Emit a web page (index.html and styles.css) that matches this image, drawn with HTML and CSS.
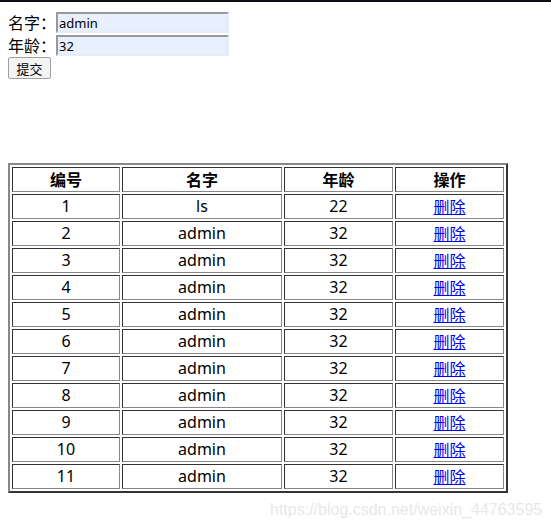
FILE: index.html
```html
<!DOCTYPE html>
<html lang="zh">
<head>
<meta charset="utf-8">
<title>用户列表</title>
<link rel="stylesheet" href="styles.css">
</head>
<body>
<div class="topbar"></div>
<div class="page">
  <form class="form">
    <div class="row"><span class="label">名字：</span><input class="field" type="text" value="admin"></div>
    <div class="row"><span class="label">年龄：</span><input class="field" type="text" value="32"></div>
    <div class="row btnrow"><button class="btn" type="button">提交</button></div>
  </form>
  <table class="grid">
    <thead>
      <tr><th class="c1">编号</th><th class="c2">名字</th><th class="c3">年龄</th><th class="c4">操作</th></tr>
    </thead>
    <tbody>
      <tr><td>1</td><td>ls</td><td>22</td><td><a href="#">删除</a></td></tr>
      <tr><td>2</td><td>admin</td><td>32</td><td><a href="#">删除</a></td></tr>
      <tr><td>3</td><td>admin</td><td>32</td><td><a href="#">删除</a></td></tr>
      <tr><td>4</td><td>admin</td><td>32</td><td><a href="#">删除</a></td></tr>
      <tr><td>5</td><td>admin</td><td>32</td><td><a href="#">删除</a></td></tr>
      <tr><td>6</td><td>admin</td><td>32</td><td><a href="#">删除</a></td></tr>
      <tr><td>7</td><td>admin</td><td>32</td><td><a href="#">删除</a></td></tr>
      <tr><td>8</td><td>admin</td><td>32</td><td><a href="#">删除</a></td></tr>
      <tr><td>9</td><td>admin</td><td>32</td><td><a href="#">删除</a></td></tr>
      <tr><td>10</td><td>admin</td><td>32</td><td><a href="#">删除</a></td></tr>
      <tr><td>11</td><td>admin</td><td>32</td><td><a href="#">删除</a></td></tr>
    </tbody>
  </table>
</div>
<div class="watermark">https://blog.csdn.net/weixin_44763595</div>
</body>
</html>
```
FILE: styles.css
```css
html, body {
  margin: 0;
  padding: 0;
  background: #fff;
}
body {
  font-family: "Noto Sans", "Noto Sans CJK SC", sans-serif;
  font-size: 16px;
  color: #000;
  position: relative;
  min-height: 528px;
  overflow: hidden;
}
.topbar {
  height: 2px;
  background: #0b0f14;
}
.page {
  padding: 9px 8px 0 8px;
}
.form {
  margin: 0;
}
.row {
  display: flex;
  align-items: center;
  height: 23px;
}
.label {
  width: 48px;
  line-height: 21px;
  font-family: "Noto Sans CJK SC", sans-serif;
}
.field {
  box-sizing: border-box;
  width: 173px;
  height: 21px;
  margin: 0;
  padding: 0 1px;
  border: 2px solid;
  border-color: #999 #e4ecf8 #e4ecf8 #999;
  background: #e8f0fe;
  font-family: "Noto Sans", "Noto Sans CJK SC", sans-serif;
  font-size: 13px;
  color: #000;
  outline: none;
}
.btnrow {
  height: 22px;
}
.btn {
  box-sizing: border-box;
  height: 22px;
  width: 43px;
  margin: 0;
  padding: 0;
  border: 1px solid #a0a0a0;
  border-radius: 2px;
  background: #f4f4f4;
  font-family: "Noto Sans CJK SC", sans-serif;
  font-size: 13px;
  color: #000;
}
.grid {
  margin-top: 84px;
  width: 500px;
  border-collapse: separate;
  border-spacing: 2px;
  border: 2px solid;
  border-color: #888 #333 #333 #888;
  table-layout: fixed;
}
.grid th, .grid td {
  box-sizing: border-box;
  border: 1px solid;
  border-color: #333 #888 #888 #333;
  padding: 0 1px;
  height: 25px;
  line-height: 21px;
  text-align: center;
  vertical-align: middle;
  font-size: 16px;
  overflow: hidden;
}
.grid th {
  font-weight: bold;
  font-family: "Noto Sans CJK SC", sans-serif;
}
.c1 { width: 108px; }
.c2 { width: 160px; }
.c3 { width: 109px; }
.c4 { width: 109px; }
.grid a {
  color: #0000ee;
  text-decoration: underline;
  font-family: "Noto Sans CJK SC", sans-serif;
  line-height: 21px;
}
.watermark {
  position: absolute;
  left: 270px;
  top: 501px;
  font-family: "Liberation Sans", Arial, sans-serif;
  font-size: 16px;
  color: #e8e8e8;
  white-space: nowrap;
}
```
